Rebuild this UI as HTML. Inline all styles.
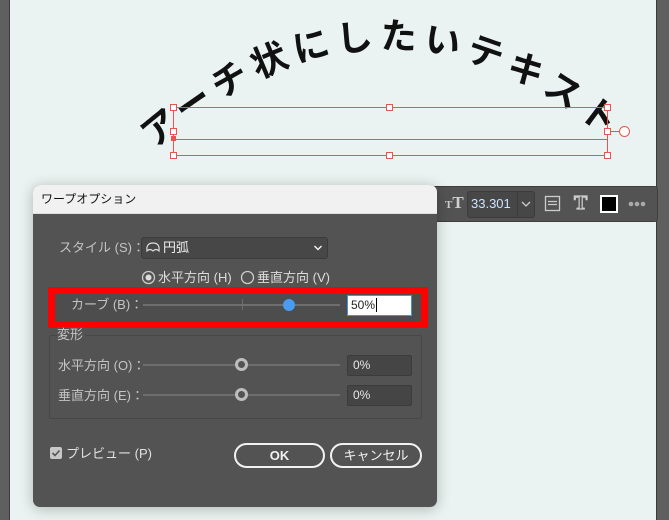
<!DOCTYPE html>
<html><head><meta charset="utf-8"><style>
*{box-sizing:border-box;margin:0;padding:0}
body{width:669px;height:520px;overflow:hidden;background:#eaf3f1;position:relative;font-family:"Liberation Sans","Noto Sans CJK JP",sans-serif}
.abs{position:absolute}
.lbl{position:absolute;color:#c4c4c4;font-size:13px;line-height:16px;white-space:nowrap}
.inp{position:absolute;background:#454545;border:1px solid #3b3b3b;border-radius:2px;color:#e8e8e8;font-size:12px;line-height:18px;padding-left:5px}
.track{position:absolute;height:2px;background:#6e6e6e}
.btn{position:absolute;border:2px solid #f2f2f2;border-radius:13px;color:#f2f2f2;font-size:13px;text-align:center;line-height:21px;font-weight:bold}
</style></head><body>
<div class="abs" style="left:0;top:0;width:9px;height:520px;background:#5f5f5f"></div>
<div class="abs" style="left:9px;top:0;width:1px;height:520px;background:#3a3a3a"></div>
<div class="abs" style="left:656px;top:0;width:13px;height:520px;background:#5f5f5f;border-left:1px solid #3a3a3a"></div>

<svg class="abs" style="left:0;top:0" width="669" height="180">
<defs><path id="arc" d="M142,160 Q390,-66 640,166"/></defs>
<text font-family="Liberation Sans,Noto Sans CJK JP,sans-serif" font-weight="bold" font-size="36" fill="#111"><textPath href="#arc" startOffset="16" textLength="500" lengthAdjust="spacing">アーチ状にしたいテキスト</textPath></text>
<g stroke="#e85454" stroke-width="1" fill="none">
<rect x="173.5" y="107.5" width="434" height="48"/>
<line x1="173" y1="139.5" x2="607" y2="139.5"/>
<line x1="607" y1="131.5" x2="619" y2="131.5"/>
<circle cx="624.5" cy="131.5" r="5" fill="#fff"/>
</g>
<g fill="#fff" stroke="#e85454" stroke-width="1">
<rect x="170.5" y="104.5" width="6" height="6"/><rect x="386.5" y="104.5" width="6" height="6"/><rect x="604.5" y="104.5" width="6" height="6"/>
<rect x="170.5" y="128.5" width="6" height="6"/><rect x="604.5" y="128.5" width="6" height="6"/>
<rect x="170.5" y="152.5" width="6" height="6"/><rect x="386.5" y="152.5" width="6" height="6"/><rect x="604.5" y="152.5" width="6" height="6"/>
</g>
<rect x="171" y="136" width="5" height="5" fill="#e85454"/>
</svg>

<!-- toolbar -->
<div class="abs" style="left:430px;top:186px;width:228px;height:36px;background:#535353;border:1px solid #3e3e3e;border-radius:3px"></div>
<div class="abs" style="left:445px;top:193px;font-family:'Liberation Serif',serif;font-weight:bold;color:#cfcfcf;font-size:17px"><span style="font-size:11px">T</span>T</div>
<div class="abs" style="left:467px;top:191px;width:68px;height:27px;background:#474747;border:1px solid #3c3c3c;border-radius:3px"></div>
<div class="abs" style="left:517px;top:191px;width:1px;height:27px;background:#3c3c3c"></div>
<div class="abs" style="left:471px;top:196px;color:#cfe3ff;font-size:13px">33.301</div>
<svg class="abs" style="left:520px;top:199px" width="12" height="10"><path d="M2 3l4 4 4-4" stroke="#ccc" fill="none" stroke-width="1.3"/></svg>
<svg class="abs" style="left:544px;top:195px" width="18" height="18"><rect x="1.5" y="1.5" width="14" height="14" stroke="#ccc" fill="none" stroke-width="1.3"/><path d="M4 6.5h9M4 9.5h9" stroke="#ccc" stroke-width="1.3"/></svg>
<div class="abs" style="left:574px;top:192px;font-family:'Liberation Serif',serif;font-size:20px;color:#535353;-webkit-text-stroke:1.2px #ccc;font-weight:bold">T</div>
<div class="abs" style="left:600px;top:195px;width:18px;height:18px;background:#000;border:2px solid #fff"></div>
<svg class="abs" style="left:628px;top:200px" width="24" height="8"><circle cx="3" cy="4" r="2.3" fill="#aaa"/><circle cx="9" cy="4" r="2.3" fill="#aaa"/><circle cx="15" cy="4" r="2.3" fill="#aaa"/></svg>

<!-- dialog -->
<div class="abs" style="left:33px;top:185px;width:404px;height:322px;background:#535353;border-radius:7px;box-shadow:0 2px 14px rgba(0,0,0,.25);overflow:hidden">
<div style="height:29px;background:#f1f1f1;border-bottom:1px solid #ddd;color:#111;font-size:12px;line-height:29px;padding-left:8px">ワープオプション</div>
</div>
<div class="lbl" style="left:59px;top:240px">スタイル (S)：</div>
<div class="abs" style="left:141px;top:237px;width:187px;height:22px;background:#474747;border:1px solid #3c3c3c;border-radius:3px"></div>
<svg class="abs" style="left:145px;top:241px" width="16" height="14"><path d="M2 10Q1 2 8 2Q15 2 14 10Q11 7 8 10Q5 7 2 10Z" stroke="#ddd" fill="none" stroke-width="1.2"/></svg>
<div class="lbl" style="left:163px;top:240px;color:#eee">円弧</div>
<svg class="abs" style="left:313px;top:244px" width="10" height="8"><path d="M1.5 2l3.5 3.5 3.5-3.5" stroke="#eee" fill="none" stroke-width="1.5"/></svg>

<svg class="abs" style="left:140px;top:270px" width="16" height="16"><circle cx="8.5" cy="7.5" r="6" fill="none" stroke="#ccc" stroke-width="1.3"/><circle cx="8.5" cy="7.5" r="3" fill="#ddd"/></svg>
<svg class="abs" style="left:239px;top:270px" width="16" height="16"><circle cx="8.5" cy="7.5" r="6" fill="none" stroke="#ccc" stroke-width="1.3"/></svg>
<div class="lbl" style="left:158px;top:270px;color:#ddd">水平方向 (H)</div>
<div class="lbl" style="left:257px;top:270px;color:#ddd">垂直方向 (V)</div>

<div class="abs" style="left:48px;top:287px;width:380px;height:41px;border:7px solid #ff0000;background:#4d4d4d"></div>
<div class="lbl" style="left:71px;top:297px">カーブ (B)：</div>
<div class="track" style="left:143px;top:304px;width:197px"></div>
<div class="abs" style="left:242px;top:299px;width:1px;height:11px;background:#6e6e6e"></div>
<div class="abs" style="left:283px;top:299px;width:12px;height:12px;border-radius:50%;background:#4a9cf0"></div>
<div class="abs" style="left:347px;top:295px;width:65px;height:21px;background:#fff;border:1px solid #4a8fe0;color:#222;font-size:12px;line-height:19px;padding-left:3px">50%<span style="border-left:1px solid #000;margin-left:1px"></span></div>

<div class="abs" style="left:49px;top:335px;width:373px;height:84px;border:1px solid #474747;border-radius:2px"></div>
<div class="lbl" style="left:57px;top:327px;background:#535353;padding-right:2px">変形</div>
<div class="lbl" style="left:58px;top:358px">水平方向 (O)：</div>
<div class="track" style="left:143px;top:364px;width:197px"></div>
<div class="abs" style="left:235px;top:358px;width:13px;height:13px;border-radius:50%;background:#535353;border:3px solid #bdbdbd"></div>
<div class="inp" style="left:347px;top:355px;width:65px;height:21px">0%</div>
<div class="lbl" style="left:58px;top:388px">垂直方向 (E)：</div>
<div class="track" style="left:143px;top:394px;width:197px"></div>
<div class="abs" style="left:235px;top:388px;width:13px;height:13px;border-radius:50%;background:#535353;border:3px solid #bdbdbd"></div>
<div class="inp" style="left:347px;top:385px;width:65px;height:21px">0%</div>

<div class="abs" style="left:50px;top:447px;width:12px;height:12px;background:#c8c8c8;border-radius:2px"></div>
<svg class="abs" style="left:50px;top:447px" width="12" height="12"><path d="M2.5 6l2.5 2.5 4.5-5" stroke="#555" fill="none" stroke-width="1.6"/></svg>
<div class="lbl" style="left:66px;top:446px;color:#e0e0e0">プレビュー (P)</div>
<div class="btn" style="left:234px;top:443px;width:91px;height:25px">OK</div>
<div class="btn" style="left:330px;top:443px;width:92px;height:25px;font-weight:normal">キャンセル</div>
</body></html>
